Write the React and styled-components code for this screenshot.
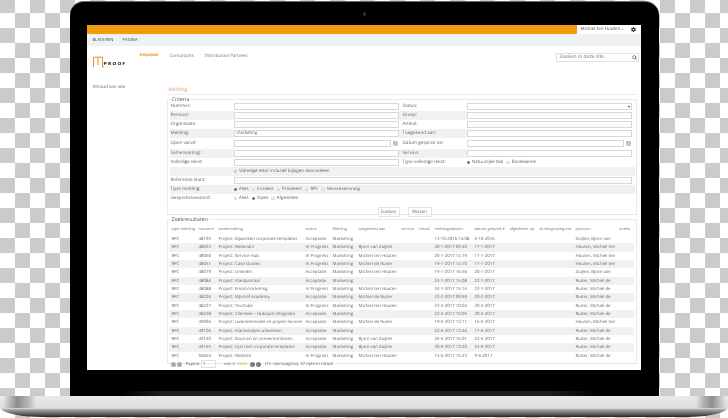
import React from 'react';
import styled, { createGlobalStyle } from 'styled-components';
import { Search, CalendarDays, ChevronDown } from 'lucide-react';
import { FaCog } from 'react-icons/fa';

const Global = createGlobalStyle`
  html, body { margin: 0; padding: 0; }
  body { font-family: "Open Sans", "Liberation Sans", sans-serif; text-rendering: geometricPrecision; }
`;

const Stage = styled.div`
  width: 728px; height: 418px; overflow: hidden;
  display: flex; flex-direction: column; align-items: center;
  background-color: #fff;
  background-image: conic-gradient(#cbcbcb 25%, #fff 0 50%, #cbcbcb 0 75%, #fff 0);
  background-size: 30px 30px;
  background-position: 0 13px;
  padding-top: 1px; box-sizing: border-box;
`;
const Lid = styled.div`
  position: relative; box-sizing: border-box;
  width: 589px; height: 395px;
  padding: 23px 18px 27px 17px;
  border-radius: 14px 14px 0 0;
  border-top: 1px solid #6a6a6a;
  background: linear-gradient(90deg, #000 50px, #1d1d1d 90px, #1d1d1d 480px, #000 530px) no-repeat bottom / 100% 5px, #000;
`;
const Camera = styled.span`
  position: absolute; left: 293px; top: 10px; width: 3px; height: 4px; border-radius: 50%;
  background: #333;
`;
const Base = styled.div`
  width: 100%; height: 21px; flex: none;
  border-radius: 0 0 42px 42px / 0 0 10px 10px;
  background:
    linear-gradient(90deg, transparent 3px, #8d8d8d 17px, #b5b5b5 28px, transparent 36px, transparent 696px, #b5b5b5 703px, #8d8d8d 712px, transparent 726px) no-repeat top / 100% 12px,
    linear-gradient(#e9eaea 0, #dcdddd 55%, #f2f2f2 57%, #b2b2b2 62%, #6a6a6a 82%, #262626 100%);
`;
const Screen = styled.div`
  height: 345px; background: #fff; overflow: hidden;
  display: flex; flex-direction: column; filter: blur(0.4px);
  color: #5f5f5f; font-size: 4.6px; line-height: 1;
`;
const TopBar = styled.div`display: flex; height: 9px; flex: none;`;
const Brand = styled.div`flex: 1; background: #f39c0b;`;
const UserBox = styled.div`
  width: 64px; box-sizing: border-box; padding: 0 5px 0 4px; background: #fff;
  display: flex; align-items: center; justify-content: space-between; font-size: 4.5px; color: #555;
  span { display: flex; align-items: center; gap: 1px; white-space: nowrap; }
  svg { flex: none; }
`;
const Ribbon = styled.div`
  height: 12px; flex: none; background: #f0f1f1; display: flex; align-items: center; gap: 9px;
  padding: 3px 0 0 6px; box-sizing: border-box; font-size: 4.2px; color: #444;
`;
const Masthead = styled.div`
  height: 39px; flex: none; box-sizing: border-box; padding: 7px 2px 0 6px;
  display: flex; align-items: flex-start;
`;
const Logo = styled.div`
  width: 41px; height: 14px; flex: none; display: flex; align-items: flex-end; margin-top: 1px;
`;
const LogoWord = styled.span`
  font-family: "DejaVu Sans", sans-serif; font-weight: 700; font-size: 4.4px; letter-spacing: 1.2px; color: #222; margin: 0 0 1px 0; transform: scaleY(.95);
`;
const Nav = styled.nav`display: flex; gap: 11px; margin-left: 6px; padding-top: 1px; font-size: 4.4px; white-space: nowrap;`;
const NavItem = styled.span`
  color: ${p => (p.$active ? '#f0932b' : '#777')};
  font-weight: ${p => (p.$active ? 700 : 400)};
  font-size: ${p => (p.$active ? '4.1px' : 'inherit')};
`;
const SearchBox = styled.div`
  margin-left: auto; width: 83px; height: 9px; box-sizing: border-box; border: 1px solid #e1e1e1;
  display: flex; align-items: center; justify-content: space-between; padding: 0 1px 0 3px; color: #777; font-size: 5px;
`;
const Body = styled.div`display: flex; flex: 1; min-height: 0;`;
const Sidebar = styled.div`width: 80px; flex: none; box-sizing: border-box; padding: 0 0 0 6px; color: #666; font-size: 4.6px;`;
const Main = styled.div`flex: 1; min-width: 0; box-sizing: border-box; padding-right: 4px; display: flex; flex-direction: column;`;
const Title = styled.div`
  height: 10px; box-sizing: border-box; padding: 3px 0 0 2px; margin-top: 0; font-size: 5px; color: #e39a6a; border-bottom: 1px solid #ececec; flex: none;
`;
const Panel = styled.fieldset`
  margin: 2px 0 0; padding: 0 1px 0 2px; border: 1px solid #e9e9e9; min-width: 0;
  height: ${p => p.$h}px; box-sizing: border-box; flex: none;
`;
const Legend = styled.legend`padding: 0 1px; font-size: 5.2px; color: #555; margin-left: 1px; line-height: 5px;`;
const Grid = styled.div`display: flex; flex-direction: column;`;
const Row = styled.div`
  display: grid; grid-template-columns: 64px 165px 68px 165px; align-items: center;
  height: ${p => p.$h || 9}px;
  background: ${p => (p.$shade ? '#f1f1f1' : 'transparent')};
`;
const Label = styled.div`
  height: 100%; display: flex; align-items: center; padding-left: 1px; box-sizing: border-box;
  background: ${p => (p.$shade ? '#f1f1f1' : 'transparent')};
  color: #666; white-space: nowrap;
`;
const LabelRight = styled(Label)`padding-left: 4px;`;
const Field = styled.div`
  height: 7px; box-sizing: border-box; border: 1px solid #d8d8d8; background: #fff;
  display: flex; align-items: center; justify-content: space-between; padding: 0 1px 0 2px; color: #666; font-size: 4.4px;
  ${p => p.$wide && 'grid-column: 2 / 5;'}
`;
const DateCell = styled.div`display: flex; align-items: center; gap: 2px; padding-right: 1px;`;
const DateField = styled(Field)`flex: 1;`;
const Caret = styled.i`width: 0; height: 0; border: 1.5px solid transparent; border-top: 2px solid #333; margin-top: 2px;`;
const Options = styled.div`
  grid-column: ${p => p.$span || '2 / 5'}; display: flex; align-items: center; gap: 3px; color: #666; font-size: 4.4px; white-space: nowrap;
`;
const Option = styled.span`display: inline-flex; align-items: center; gap: 2px;`;
const Mark = styled.i`
  width: 3.5px; height: 3.5px; box-sizing: border-box; flex: none; border: .7px solid ${p => (p.$on ? '#666' : '#c6c6c6')};
  border-radius: ${p => (p.$square ? '0' : '50%')};
  background: ${p => (p.$on ? '#666' : '#fff')};
`;
const Actions = styled.div`
  display: flex; gap: 8px; padding: 4px 0 0 208px; height: 12px; box-sizing: content-box;
`;
const Btn = styled.div`
  width: ${p => p.$w}px; height: 10px; box-sizing: border-box; border: 1px solid #e4e4e4; display: flex; align-items: center; justify-content: center; color: #666; font-size: 4.6px;
`;
const Table = styled.table`
  width: 465px; table-layout: fixed; border-collapse: collapse; margin: 3px 0 0 -1px;
  font-size: 4.35px; color: #666;
  th { font-weight: 400; text-align: left; height: 10px; padding: 0; font-size: 3.9px; color: #777; white-space: nowrap; overflow: visible; }
  td { height: 8.33px; padding: 0; white-space: nowrap; overflow: visible; }
  th:first-child, td:first-child { padding-left: 3px; }
  tbody tr:nth-child(even) { background: #f1f1f1; }
`;
const Pager = styled.div`
  display: flex; align-items: center; height: 9px; padding-left: 1px; color: #666; font-size: 4.3px; white-space: nowrap;
`;
const Dot = styled.i`
  width: 5px; height: 5px; border-radius: 50%; background: ${p => (p.$dark ? '#7d7d7d' : '#adadad')}; margin-right: 1px; flex: none;
`;
const PageLabel = styled.span`margin-left: 3px;`;
const PageInput = styled.div`width: 15px; height: 8px; box-sizing: border-box; border: 1px solid #ddd; padding-left: 1px; margin: 0 8px 0 1px; display: flex; align-items: center;`;
const Next = styled.span`color: #eda23c; margin: 0 3px 0 2px;`;
const PagerNote = styled.span`margin-left: 3px;`;

const widths = [30, 20, 87, 27, 26, 43, 17, 16, 40, 35, 30, 36, 44, 14];
const headers = ['type melding', 'nummer', 'samenvatting', 'status', 'Melding', 'toegekend aan', 'service', 'inhaal', 'meldingsdatum', 'datum gesprek ▾', 'afgesloten op', 'sluitingscategorie', 'persoon', 'snelst'];
const B = 'Bjorn van Zuijlen', T = 'Michiel ten Houten', R = 'Michiel de Ruiter';
const ZB = 'Zuijlen, Bjorn van', HM = 'Houten, Michiel ten', RM = 'Ruiter, Michiel de';
const rows = [
  ['48195', 'Project: Bijwerken corporate templates', 'Acceptatie', '', '13-10-2016 14:08', '5-10-2016', ZB],
  ['48033', 'Project: Webinars', 'In Progress', B, '20-1-2017 09:40', '17-1-2017', HM],
  ['48050', 'Project: Service Hub', 'In Progress', T, '20-1-2017 14:19', '17-1-2017', HM],
  ['48051', 'Project: Case studies', 'In Progress', R, '19-1-2017 14:10', '17-1-2017', HM],
  ['48079', 'Project: LinkedIn', 'Acceptatie', T, '19-1-2017 16:56', '20-1-2017', ZB],
  ['48086', 'Project: Klantportaal', 'Acceptatie', '', '24-1-2017 15:08', '23-1-2017', RM],
  ['48088', 'Project: Email marketing', 'In Progress', T, '24-1-2017 15:16', '23-1-2017', RM],
  ['48226', 'Project: Mproof Academy', 'Acceptatie', R, '23-2-2017 09:59', '20-2-2017', RM],
  ['48227', 'Project: YouTube', 'In Progress', T, '23-2-2017 10:04', '20-2-2017', RM],
  ['48228', 'Project: Clientele – Hubspot integratie', 'Acceptatie', '', '23-2-2017 10:05', '20-2-2017', RM],
  ['49096', 'Project: Lwantenmodel en prijzen herzien', 'Acceptatie', R, '19-5-2017 13:11', '16-5-2017', HM],
  ['49106', 'Project: Klantanalyse uitwerken', 'Acceptatie', '', '23-5-2017 13:46', '17-5-2017', RM],
  ['49140', 'Project: Sourcen on zoneemonitoren', 'Acceptatie', B, '26-5-2017 16:01', '23-5-2017', RM],
  ['49155', 'Project: Lijst met corporate templates', 'Acceptatie', B, '30-5-2017 13:20', '24-5-2017', RM],
  ['50664', 'Project: Website', 'In Progress', T, '14-6-2017 15:43', '9-6-2017', RM],
];

const Cal = () => <CalendarDays size={5} color="#777" strokeWidth={2} />;

export default function App() {
  return (
    <Stage>
      <Global />
      <Lid>
        <Camera />
        <Screen>
          <TopBar>
            <Brand />
            <UserBox>
              <span>Michiel ten Houten <ChevronDown size={3} strokeWidth={4} /></span>
              <FaCog size={5} color="#333" />
            </UserBox>
          </TopBar>
          <Ribbon><span>BLADEREN</span><span>PAGINA</span></Ribbon>
          <Masthead>
            <Logo>
              <svg width="11" height="12" viewBox="0 0 11 12" style={{ flex: 'none' }}>
                <path d="M0.5 11V1.2H5V9M5 1.2H9.5V11H11" fill="none" stroke="#e8912a" strokeWidth="1" />
              </svg>
              <LogoWord>PROOF</LogoWord>
            </Logo>
            <Nav>
              <NavItem $active>Helpdesk</NavItem>
              <NavItem>Consultants</NavItem>
              <NavItem>Distribution Partners</NavItem>
            </Nav>
            <SearchBox>Zoeken in deze site<Search size={5} color="#444" strokeWidth={3} /></SearchBox>
          </Masthead>
          <Body>
            <Sidebar>Inhoud van site</Sidebar>
            <Main>
              <Title>Melding</Title>
              <Panel $h={118}>
                <Legend>Criteria</Legend>
                <Grid>
                  <Row><Label>Nummer:</Label><Field /><LabelRight>Status:</LabelRight><Field><span /><Caret /></Field></Row>
                  <Row><Label $shade>Persoon:</Label><Field /><LabelRight $shade>Groep:</LabelRight><Field /></Row>
                  <Row><Label>Organisatie:</Label><Field /><LabelRight>Artikel:</LabelRight><Field /></Row>
                  <Row><Label $shade>Melding:</Label><Field>marketing</Field><LabelRight $shade>Toegekend aan:</LabelRight><Field /></Row>
                  <Row $h={11}><Label>Open vanaf:</Label><DateCell><DateField /><Cal /></DateCell><LabelRight>Datum gesprek tot:</LabelRight><DateCell><DateField /><Cal /></DateCell></Row>
                  <Row><Label $shade>Samenvatting:</Label><Field /><LabelRight $shade>Service:</LabelRight><Field /></Row>
                  <Row><Label>Volledige tekst:</Label><Field /><LabelRight>Type volledige tekst:</LabelRight><Options $span="4"><Option><Mark $on />Natuurlijke taal</Option><Option><Mark />Booleaanse</Option></Options></Row>
                  <Row $h={9} $shade><span /><Options><Option><Mark $square />Volledige tekst inclusief bijlagen doorzoeken</Option></Options></Row>
                  <Row $h={9}><Label>Referentie klant:</Label><Field $wide /></Row>
                  <Row $h={9} $shade><Label>Type melding:</Label><Options><Option><Mark $on />Alles</Option><Option><Mark />Incident</Option><Option><Mark />Probleem</Option><Option><Mark />RFC</Option><Option><Mark />Serviceaanvraag</Option></Options></Row>
                  <Row $h={9}><Label>Gesprekstoestand:</Label><Options><Option><Mark />Alles</Option><Option><Mark $on />Open</Option><Option><Mark />Afgesloten</Option></Options></Row>
                </Grid>
                <Actions><Btn $w={22}>Zoeken</Btn><Btn $w={24}>Wissen</Btn></Actions>
              </Panel>
              <Panel $h={147}>
                <Legend>Zoekresultaten</Legend>
                <Table>
                  <colgroup>{widths.map((w, i) => <col key={i} style={{ width: w }} />)}</colgroup>
                  <thead><tr>{headers.map(h => <th key={h}>{h}</th>)}</tr></thead>
                  <tbody>
                    {rows.map(r => (
                      <tr key={r[0]}>
                        <td>RFC</td><td>{r[0]}</td><td>{r[1]}</td><td>{r[2]}</td><td>Marketing</td><td>{r[3]}</td>
                        <td /><td /><td>{r[4]}</td><td>{r[5]}</td><td /><td /><td>{r[6]}</td><td />
                      </tr>
                    ))}
                  </tbody>
                </Table>
                <Pager>
                  <Dot /><Dot /><PageLabel>Pagina:</PageLabel><PageInput>1</PageInput>van 3<Next>Gaan</Next><Dot $dark /><Dot $dark /><PagerNote>(15 rijen/pagina), 37 rijen in totaal</PagerNote>
                </Pager>
              </Panel>
            </Main>
          </Body>
        </Screen>
      </Lid>
      <Base />
    </Stage>
  );
}
